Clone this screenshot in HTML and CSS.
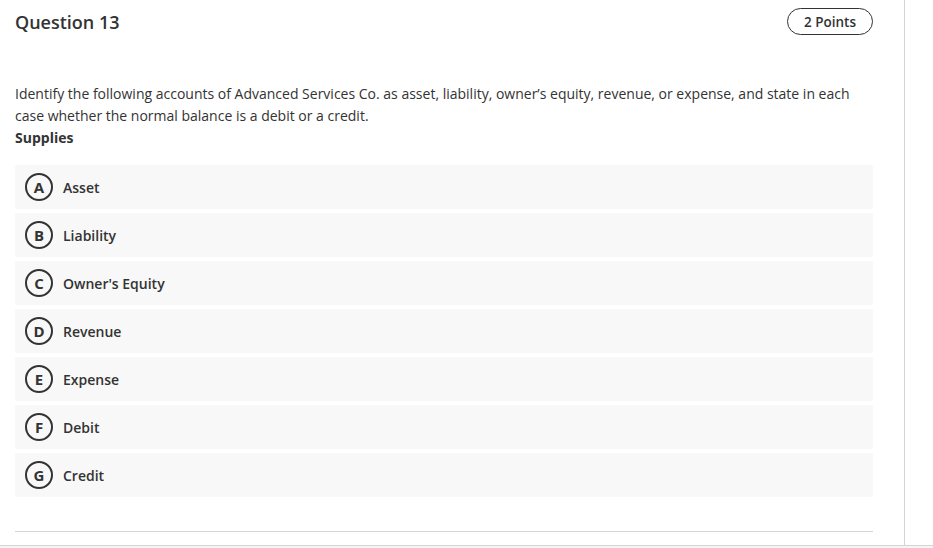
FILE: index.html
```html
<!DOCTYPE html>
<html lang="en">
  <head>
    <meta charset="UTF-8" />
    <meta name="viewport" content="width=device-width, initial-scale=1.0" />
    <title>Question 13</title>
    <link rel="stylesheet" href="styles.css">
  </head>
  <body>
    <div class="page">
      <div class="question">
        <div class="question-header">
          <h2>Question 13</h2>
          <span class="points">2 Points</span>
        </div>

        <p class="prompt">
          Identify the following accounts of Advanced Services Co. as asset, liability, owner’s equity, revenue, or expense, and state in each case whether the normal balance is a debit or a credit.
        </p>
        <p class="prompt-item">Supplies</p>

        <ul class="options">
          <li class="option"><span class="letter">A</span><span>Asset</span></li>
          <li class="option"><span class="letter">B</span><span>Liability</span></li>
          <li class="option"><span class="letter">C</span><span>Owner's Equity</span></li>
          <li class="option"><span class="letter">D</span><span>Revenue</span></li>
          <li class="option"><span class="letter">E</span><span>Expense</span></li>
          <li class="option"><span class="letter">F</span><span>Debit</span></li>
          <li class="option"><span class="letter">G</span><span>Credit</span></li>
        </ul>

        <hr class="divider" />
      </div>
    </div>
  </body>
</html>
```

FILE: styles.css
```css
* {
  margin: 0;
  padding: 0;
  box-sizing: border-box;
  font-family: "Open Sans", Arial, sans-serif;
}

body {
  background-color: #f5f5f5;
  color: #333;
}

.page {
  height: 546px;
  background-color: white;
  border-bottom: 1px solid #d4d4d4;
}

.question {
  width: 905px;
  height: 100%;
  padding: 8px 31px 0 15px;
  border-right: 1px solid #d4d4d4;
}

.question-header {
  display: flex;
  align-items: center;
  justify-content: space-between;
  height: 27px;
}

h2 {
  font-size: 18px;
  font-weight: 600;
  color: #333;
}

.points {
  display: flex;
  flex: none;
  align-items: center;
  height: 27px;
  padding: 0 16px;
  border: 1px solid #333;
  border-radius: 14px;
  font-size: 13.5px;
  font-weight: 600;
}

.prompt {
  margin-top: 48px;
  font-size: 14px;
  line-height: 22px;
}

.prompt-item {
  font-size: 14px;
  line-height: 22px;
  font-weight: 700;
}

.options {
  list-style: none;
  margin-top: 16px;
}

.option {
  display: flex;
  align-items: center;
  height: 44px;
  margin-bottom: 4px;
  padding-left: 10px;
  background-color: #f8f8f8;
  border-radius: 2px;
  font-size: 14px;
  font-weight: 600;
}

.option:last-child {
  margin-bottom: 0;
}

.letter {
  display: flex;
  flex: 0 0 28px;
  align-items: center;
  justify-content: center;
  width: 28px;
  height: 28px;
  margin-right: 10px;
  border: 2px solid #333;
  border-radius: 50%;
  font-size: 15px;
  font-weight: 700;
  line-height: 1;
}

.divider {
  margin-top: 34px;
  border: none;
  border-top: 1px solid #d4d4d4;
}
```
